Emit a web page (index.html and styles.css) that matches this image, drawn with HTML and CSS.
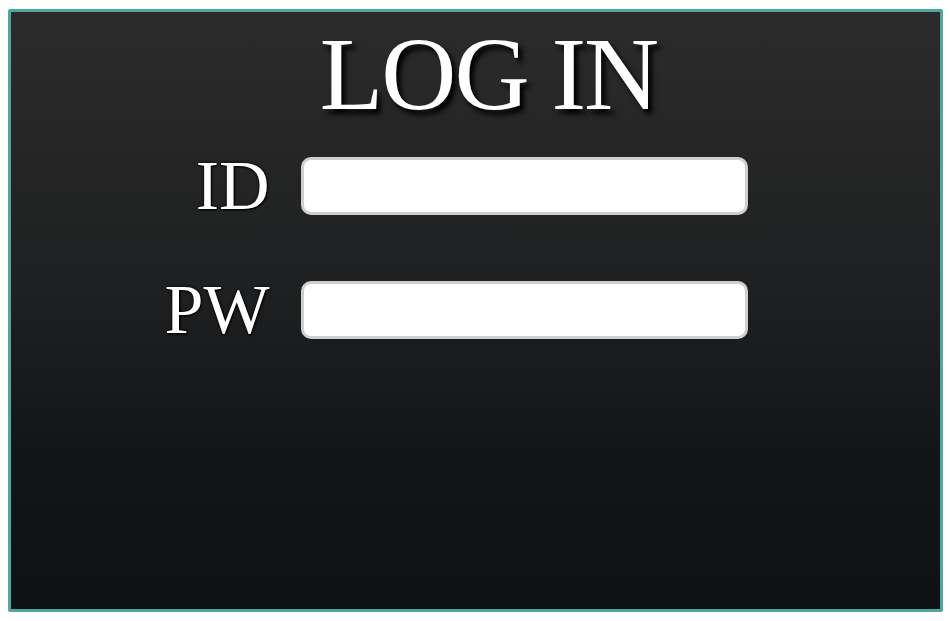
FILE: index.html
```html
<!DOCTYPE html>
<html lang="en">
<head>
  <meta charset="UTF-8" />
  <meta name="viewport" content="width=device-width, initial-scale=1.0"/>
  <title>Log In</title>
  <link rel="stylesheet" href="styles.css">
</head>
<body>

  <div class="frame">
    <h1 class="title">LOG IN</h1>

    <form class="login-form" id="loginForm">
      <label for="userId">ID</label>
      <input type="text" id="userId" name="userId" />

      <label for="userPw">PW</label>
      <input type="password" id="userPw" name="userPw" />
    </form>
  </div>

</body>
</html>
```

FILE: styles.css
```css
body {
  margin: 0;
  background-color: #fff;
  font-family: "Liberation Serif", "Times New Roman", serif;
}

.frame {
  box-sizing: border-box;
  width: 935px;
  height: 603px;
  margin: 9px 0 0 8px;
  border: 3px solid #4fa79b;
  border-radius: 2px;
  background: linear-gradient(to bottom, #2b2b2b 0%, #1f2021 45%, #121517 75%, #0f1214 100%);
  display: flex;
  flex-direction: column;
  align-items: center;
}

.title {
  margin: 6px 0 0 26px;
  font-weight: normal;
  font-size: 104px;
  line-height: 112px;
  letter-spacing: -2px;
  color: #fff;
  text-shadow: 4px 5px 5px #000;
}

.login-form {
  display: grid;
  grid-template-columns: 140px 447px;
  column-gap: 31px;
  row-gap: 66px;
  align-items: start;
  margin: 27px 0 0 -74px;
}

label {
  text-align: right;
  font-size: 70px;
  line-height: 58px;
  color: #fff;
  text-shadow: 0 0 3px #000, 1px 1px 2px #000;
}

input {
  box-sizing: border-box;
  width: 447px;
  height: 58px;
  margin: 0;
  padding: 0 12px;
  border: 3px solid #cfcfcf;
  border-radius: 10px;
  background-color: #fff;
  font-size: 24px;
  outline: none;
}
```
